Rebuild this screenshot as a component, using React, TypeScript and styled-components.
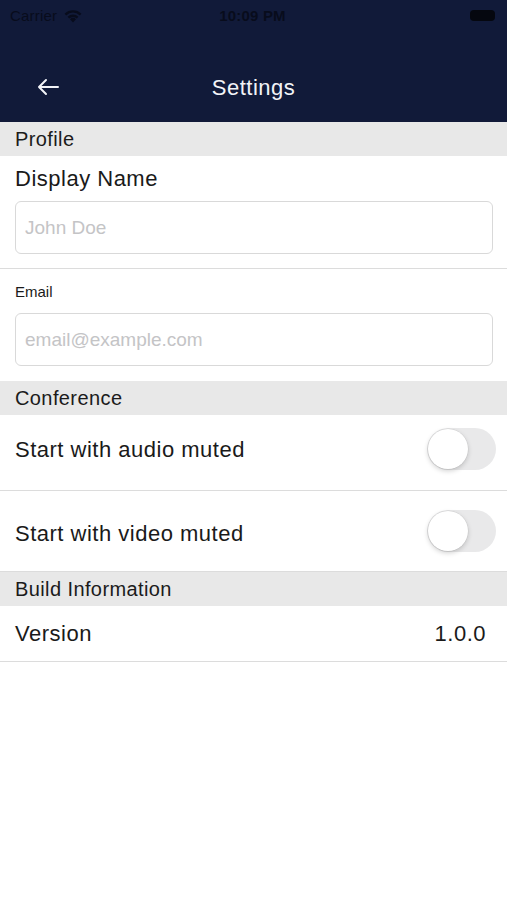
import styled, { createGlobalStyle } from 'styled-components'

const GlobalStyle = createGlobalStyle`
  body {
    margin: 0;
    background: #ffffff;
    font-family: 'Liberation Sans', Arial, sans-serif;
  }
`

const Page = styled.div`
  width: 507px;
  min-height: 900px;
  background: #ffffff;
`

const Header = styled.header`
  background: #111a39;
  height: 122px;
  display: flex;
  flex-direction: column;
`

const StatusBar = styled.div`
  height: 30px;
  padding: 0 12px 0 10px;
  display: flex;
  align-items: center;
  justify-content: space-between;
  color: #080c1c;
  font-size: 15px;
  letter-spacing: 0.2px;
`

const Carrier = styled.div`
  display: flex;
  align-items: center;
  gap: 6px;
  width: 100px;
`

const Clock = styled.div`
  font-size: 15px;
  font-weight: bold;
  letter-spacing: 0.2px;
`

const Battery = styled.div`
  width: 100px;
  display: flex;
  justify-content: flex-end;
  & > span {
    width: 25px;
    height: 11px;
    border-radius: 4px;
    background: #05070f;
  }
`

const TitleBar = styled.div`
  margin-top: 28px;
  height: 60px;
  display: flex;
  align-items: center;
  justify-content: center;
  position: relative;
`

const BackButton = styled.button`
  position: absolute;
  left: 33px;
  top: 50%;
  transform: translateY(-50%);
  margin-top: -1px;
  background: none;
  border: 0;
  padding: 4px;
  display: flex;
  cursor: pointer;
`

const Title = styled.h1`
  margin: 0;
  color: #f2f3f7;
  font-size: 22px;
  font-weight: normal;
  letter-spacing: 0.5px;
`

const SectionHeader = styled.div`
  background: #e8e8e8;
  height: 34px;
  display: flex;
  align-items: center;
  padding-left: 15px;
  font-size: 20px;
  letter-spacing: 0.4px;
  color: #1b1b1b;
`

const FieldBlock = styled.div<{ $divider?: boolean }>`
  padding: ${(p) => (p.$divider ? '0 14px 14px 15px' : '0 14px 15px 15px')};
  border-bottom: ${(p) => (p.$divider ? '1px solid #dcdcdc' : 'none')};
`

const FieldLabel = styled.div<{ $small?: boolean }>`
  color: #1a1a1a;
  font-size: ${(p) => (p.$small ? '15px' : '22px')};
  letter-spacing: ${(p) => (p.$small ? '0' : '0.5px')};
  height: ${(p) => (p.$small ? '44px' : '45px')};
  display: flex;
  align-items: center;
`

const TextInput = styled.input`
  box-sizing: border-box;
  width: 100%;
  height: 53px;
  border: 1px solid #d9d9d9;
  border-radius: 6px;
  padding: 0 9px;
  font-family: 'Liberation Sans', Arial, sans-serif;
  font-size: 19px;
  color: #222;
  outline: none;
  &::placeholder {
    color: #c4c4c6;
  }
`

const SwitchRow = styled.div<{ $height: number; $top: number }>`
  box-sizing: border-box;
  height: ${(p) => p.$height}px;
  padding: ${(p) => p.$top}px 11px 0 15px;
  border-bottom: 1px solid #dcdcdc;
`

const SwitchLine = styled.div<{ $shift: number }>`
  height: 42px;
  display: flex;
  align-items: center;
  justify-content: space-between;
  & > span {
    position: relative;
    top: ${(p) => p.$shift}px;
  }
`

const RowText = styled.span`
  font-size: 22px;
  letter-spacing: 0.5px;
  color: #1a1a1a;
`

const Track = styled.div`
  width: 69px;
  height: 42px;
  border-radius: 21px;
  background: #e9e9ea;
  display: flex;
  align-items: center;
  padding: 1px;
  box-sizing: border-box;
`

const Knob = styled.div`
  width: 40px;
  height: 40px;
  border-radius: 50%;
  background: #ffffff;
  box-shadow: 0 2px 5px rgba(0, 0, 0, 0.18), 0 0 0 0.5px rgba(0, 0, 0, 0.08);
`

const InfoRow = styled.div`
  height: 55px;
  display: flex;
  align-items: center;
  justify-content: space-between;
  padding: 0 21px 0 15px;
  border-bottom: 1px solid #dcdcdc;
`

const Toggle = () => (
  <Track>
    <Knob />
  </Track>
)

const WifiIcon = () => (
  <svg width="20" height="15" viewBox="0 0 20 15">
    <path d="M10 14.5l-3-3.2a4.3 4.3 0 0 1 6 0z" fill="#080c1c" />
    <path d="M4.6 8.8a7.6 7.6 0 0 1 10.8 0l-1.6 1.7a5.3 5.3 0 0 0-7.6 0z" fill="#080c1c" />
    <path d="M1.6 5.7a11.9 11.9 0 0 1 16.8 0l-1.6 1.7a9.6 9.6 0 0 0-13.6 0z" fill="#080c1c" />
  </svg>
)

export default function App() {
  return (
    <Page>
      <GlobalStyle />
      <Header>
        <StatusBar>
          <Carrier>
            Carrier <WifiIcon />
          </Carrier>
          <Clock>10:09 PM</Clock>
          <Battery>
            <span />
          </Battery>
        </StatusBar>
        <TitleBar>
          <BackButton aria-label="Back">
            <svg width="22" height="17" viewBox="0 0 22 17" fill="none">
              <path
                d="M21 8.5H2M9 1.5L2 8.5l7 7"
                stroke="#f2f3f7"
                strokeWidth="2"
                strokeLinecap="round"
                strokeLinejoin="round"
              />
            </svg>
          </BackButton>
          <Title>Settings</Title>
        </TitleBar>
      </Header>

      <SectionHeader>Profile</SectionHeader>
      <FieldBlock $divider>
        <FieldLabel>Display Name</FieldLabel>
        <TextInput placeholder="John Doe" />
      </FieldBlock>
      <FieldBlock>
        <FieldLabel $small>Email</FieldLabel>
        <TextInput placeholder="email@example.com" />
      </FieldBlock>

      <SectionHeader>Conference</SectionHeader>
      <SwitchRow $height={76} $top={13}>
        <SwitchLine $shift={1}>
          <RowText>Start with audio muted</RowText>
          <Toggle />
        </SwitchLine>
      </SwitchRow>
      <SwitchRow $height={81} $top={19}>
        <SwitchLine $shift={3}>
          <RowText>Start with video muted</RowText>
          <Toggle />
        </SwitchLine>
      </SwitchRow>

      <SectionHeader>Build Information</SectionHeader>
      <InfoRow>
        <RowText>Version</RowText>
        <RowText>1.0.0</RowText>
      </InfoRow>
    </Page>
  )
}
